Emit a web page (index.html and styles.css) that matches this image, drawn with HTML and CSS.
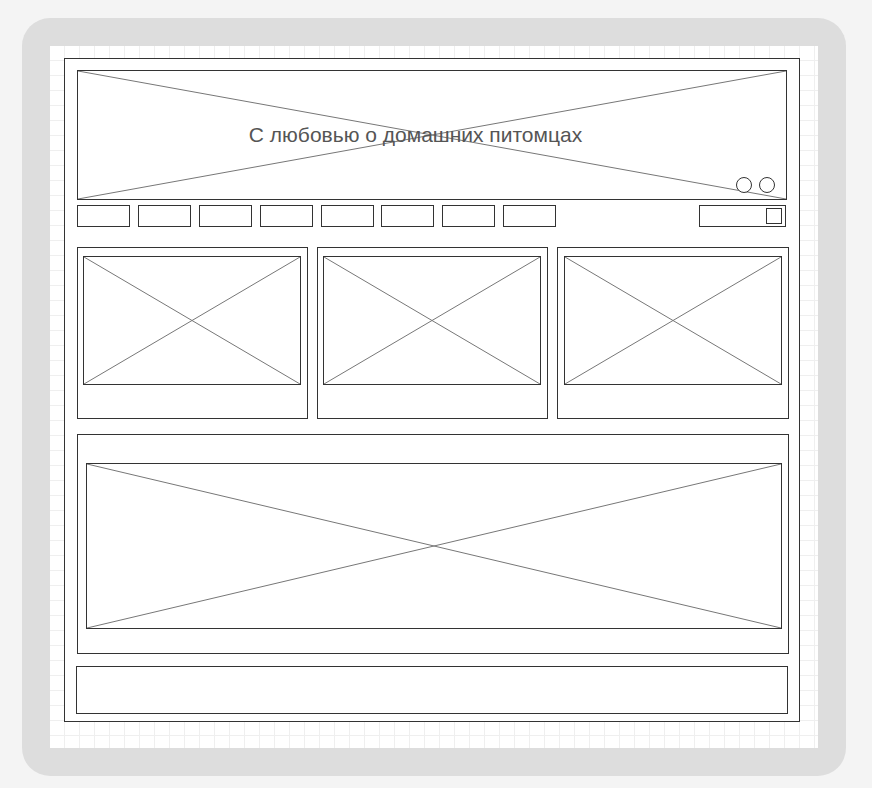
FILE: index.html
```html
<!DOCTYPE html>
<html lang="ru">
<head>
    <meta charset="UTF-8">
    <meta name="viewport" content="width=device-width, initial-scale=1.0">
    <title>С любовью о домашних питомцах</title>
    <link rel="stylesheet" href="styles.css">
</head>
<body>
    <div class="frame">
        <div class="canvas">
            <div class="wireframe">
                <div class="header placeholder">
                    <svg class="cross" viewBox="0 0 100 100" preserveAspectRatio="none"><line x1="0" y1="0" x2="100" y2="100"/><line x1="100" y1="0" x2="0" y2="100"/></svg>
                    <h1 class="title">С любовью о домашних питомцах</h1>
                    <div class="socials">
                        <span class="circle"></span>
                        <span class="circle"></span>
                    </div>
                </div>

                <div class="nav">
                    <div class="menu">
                        <span class="menu-item"></span>
                        <span class="menu-item"></span>
                        <span class="menu-item"></span>
                        <span class="menu-item"></span>
                        <span class="menu-item"></span>
                        <span class="menu-item"></span>
                        <span class="menu-item"></span>
                        <span class="menu-item"></span>
                    </div>
                    <div class="search">
                        <span class="search-btn"></span>
                    </div>
                </div>

                <div class="cards">
                    <div class="card">
                        <div class="card-image placeholder">
                            <svg class="cross" viewBox="0 0 100 100" preserveAspectRatio="none"><line x1="0" y1="0" x2="100" y2="100"/><line x1="100" y1="0" x2="0" y2="100"/></svg>
                        </div>
                    </div>
                    <div class="card">
                        <div class="card-image placeholder">
                            <svg class="cross" viewBox="0 0 100 100" preserveAspectRatio="none"><line x1="0" y1="0" x2="100" y2="100"/><line x1="100" y1="0" x2="0" y2="100"/></svg>
                        </div>
                    </div>
                    <div class="card card-last">
                        <div class="card-image placeholder">
                            <svg class="cross" viewBox="0 0 100 100" preserveAspectRatio="none"><line x1="0" y1="0" x2="100" y2="100"/><line x1="100" y1="0" x2="0" y2="100"/></svg>
                        </div>
                    </div>
                </div>

                <div class="feature">
                    <div class="feature-image placeholder">
                        <svg class="cross" viewBox="0 0 100 100" preserveAspectRatio="none"><line x1="0" y1="0" x2="100" y2="100"/><line x1="100" y1="0" x2="0" y2="100"/></svg>
                    </div>
                </div>

                <div class="footer"></div>
            </div>
        </div>
    </div>
</body>
</html>
```

FILE: styles.css
```css
* {
    margin: 0;
    padding: 0;
    box-sizing: border-box;
}

body {
    font-family: "Liberation Sans", Arial, sans-serif;
    background-color: #f4f4f4;
    padding: 18px 0 0 22px;
}

.frame {
    width: 824px;
    padding: 28px;
    background: #dddddd;
    border-radius: 28px;
}

.canvas {
    width: 768px;
    height: 702px;
    padding: 12px 0 0 14px;
    background-color: #fff;
    background-image:
        linear-gradient(to right, transparent 14px, #efefef 14px, #efefef 15px, transparent 15px),
        linear-gradient(to bottom, transparent 14px, #efefef 14px, #efefef 15px, transparent 15px);
    background-size: 15px 15px;
}

.wireframe {
    width: 736px;
    height: 664px;
    padding: 11px 0 0 12px;
    background: #fff;
    border: 1px solid #333;
}

.placeholder {
    position: relative;
    border: 1px solid #333;
    background: #fff;
}

.cross {
    position: absolute;
    top: 0;
    left: 0;
    width: 100%;
    height: 100%;
}

.cross line {
    stroke: #777;
    stroke-width: 1;
    vector-effect: non-scaling-stroke;
}

.header {
    width: 710px;
    height: 130px;
    display: flex;
    align-items: center;
    justify-content: center;
    padding-right: 33px;
}

.title {
    position: relative;
    font-size: 21px;
    font-weight: normal;
    color: #555;
}

.socials {
    position: absolute;
    right: 11px;
    bottom: 6px;
    display: flex;
    gap: 7px;
}

.circle {
    width: 16px;
    height: 16px;
    border: 1px solid #333;
    border-radius: 50%;
    background: #fff;
}

.nav {
    width: 709px;
    margin-top: 5px;
    display: flex;
    justify-content: space-between;
}

.menu {
    display: flex;
    gap: 7.9px;
}

.menu-item {
    width: 53px;
    height: 22px;
    border: 1px solid #333;
}

.search {
    width: 87px;
    height: 22px;
    border: 1px solid #333;
    display: flex;
    justify-content: flex-end;
    align-items: center;
    padding-right: 3px;
}

.search-btn {
    width: 16px;
    height: 16px;
    border: 1px solid #333;
}

.cards {
    margin-top: 20px;
    display: flex;
    gap: 9px;
}

.card {
    width: 231px;
    height: 172px;
    border: 1px solid #333;
    padding: 8px 0 0 5px;
}

.card-last {
    width: 232px;
    padding-left: 6px;
}

.card-image {
    width: 218px;
    height: 129px;
}

.feature {
    width: 712px;
    height: 220px;
    margin-top: 15px;
    border: 1px solid #333;
    padding: 28px 0 0 8px;
}

.feature-image {
    width: 696px;
    height: 166px;
}

.footer {
    width: 712px;
    height: 48px;
    margin: 12px 0 0 -1px;
    border: 1px solid #333;
}
```
